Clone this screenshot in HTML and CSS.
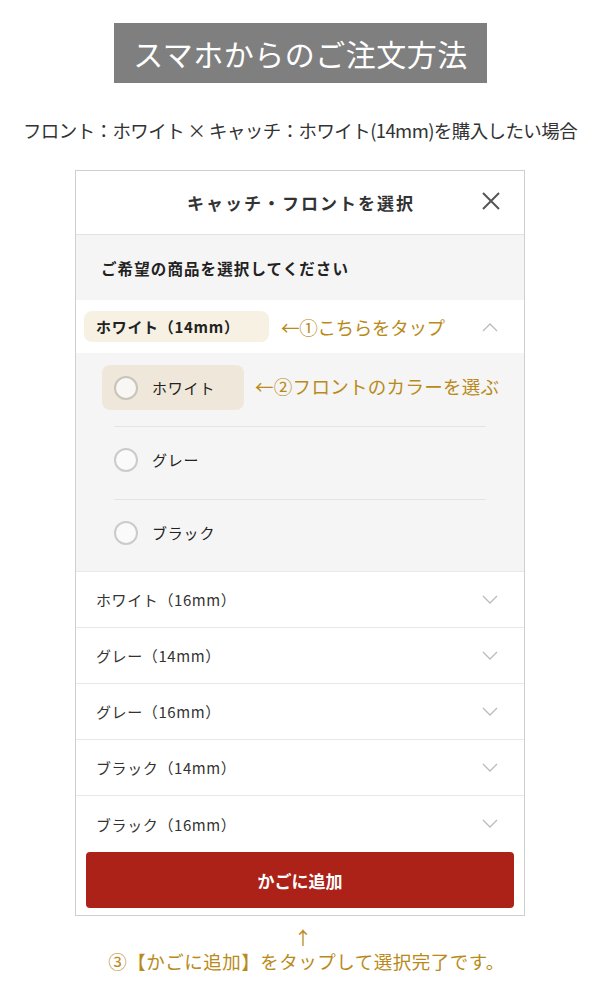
FILE: index.html
```html
<!DOCTYPE html>
<html lang="ja">
<head>
<meta charset="utf-8">
<link rel="stylesheet" href="styles.css">
</head>
<body>
<div class="page">
  <div class="title-wrap"><h1 class="title">スマホからのご注文方法</h1></div>
  <p class="lead">フロント：ホワイト × キャッチ：ホワイト(14mm)を購入したい場合</p>
  <div class="panel">
    <div class="panel-head">
      <span class="panel-title">キャッチ・フロントを選択</span>
      <svg class="close" width="22" height="22" viewBox="0 0 22 22"><path d="M3 3L19 19M19 3L3 19" stroke="#555" stroke-width="2" fill="none"/></svg>
    </div>
    <div class="prompt">ご希望の商品を選択してください</div>
    <div class="row row-open">
      <span class="badge">ホワイト（14mm）</span>
      <span class="note">←①こちらをタップ</span>
      <svg class="chev" width="16" height="10" viewBox="0 0 16 10"><path d="M1 9L8 2L15 9" stroke="#bbb" stroke-width="1.3" fill="none"/></svg>
    </div>
    <div class="options">
      <div class="opt opt-first">
        <span class="opt-hl"><span class="radio"></span><span class="opt-label">ホワイト</span></span>
        <span class="note note2">←②フロントのカラーを選ぶ</span>
      </div>
      <div class="opt"><span class="opt-hl plain"><span class="radio"></span><span class="opt-label">グレー</span></span></div>
      <div class="opt"><span class="opt-hl plain"><span class="radio"></span><span class="opt-label">ブラック</span></span></div>
    </div>
    <div class="row"><span class="row-label">ホワイト（16mm）</span><svg class="chev" width="16" height="10" viewBox="0 0 16 10"><path d="M1 1L8 8L15 1" stroke="#bbb" stroke-width="1.3" fill="none"/></svg></div>
    <div class="row"><span class="row-label">グレー（14mm）</span><svg class="chev" width="16" height="10" viewBox="0 0 16 10"><path d="M1 1L8 8L15 1" stroke="#bbb" stroke-width="1.3" fill="none"/></svg></div>
    <div class="row"><span class="row-label">グレー（16mm）</span><svg class="chev" width="16" height="10" viewBox="0 0 16 10"><path d="M1 1L8 8L15 1" stroke="#bbb" stroke-width="1.3" fill="none"/></svg></div>
    <div class="row"><span class="row-label">ブラック（14mm）</span><svg class="chev" width="16" height="10" viewBox="0 0 16 10"><path d="M1 1L8 8L15 1" stroke="#bbb" stroke-width="1.3" fill="none"/></svg></div>
    <div class="row row-last"><span class="row-label">ブラック（16mm）</span><svg class="chev" width="16" height="10" viewBox="0 0 16 10"><path d="M1 1L8 8L15 1" stroke="#bbb" stroke-width="1.3" fill="none"/></svg></div>
    <div class="btn-wrap"><div class="btn">かごに追加</div></div>
  </div>
  <div class="foot">
    <div class="arrow">↑</div>
    <div class="foot-text">③【かごに追加】をタップして選択完了です。</div>
  </div>
</div>
</body>
</html>
```
FILE: styles.css
```css
* { box-sizing: border-box; }
html, body { margin: 0; padding: 0; background: #fff; }
body { font-family: "Noto Sans CJK JP", "Noto Sans", sans-serif; color: #333; }
.page { width: 600px; padding-top: 23px; }
.title-wrap { display: flex; justify-content: center; }
.title {
  margin: 0; width: 373px; height: 60px; margin-left: 1px;
  background: #7f7f7f; color: #fff; font-weight: 400; font-size: 30px;
  display: flex; align-items: center; justify-content: center; letter-spacing: 0.5px;
}
.lead { margin: 25px 0 0; text-align: center; font-size: 18.5px; line-height: 44px; color: #333; letter-spacing: -0.6px; }
.panel { width: 450px; margin: 18px 0 0 75px; border: 1px solid #cfcfcf; background: #fff; }
.panel-head { height: 64px; display: flex; align-items: center; justify-content: center; position: relative; border-bottom: 1px solid #e2e2e2; }
.panel-title { font-size: 17px; font-weight: 700; color: #333; letter-spacing: 2px; margin-left: 2px; }
.close { position: absolute; right: 22px; top: 19px; }
.prompt { height: 65px; background: #f5f5f5; display: flex; align-items: center; padding-left: 25px; font-size: 15.5px; font-weight: 700; color: #222; letter-spacing: 1.1px; }
.row { height: 56px; display: flex; align-items: center; padding-left: 20px; padding-right: 26px; border-bottom: 1px solid #e8e8e8; }
.row-open { height: 53px; padding-left: 8px; border-bottom: none; }
.badge { background: #f7f1e3; border-radius: 8px; height: 31px; width: 185px; flex: none; display: flex; align-items: center; padding-left: 12px; font-size: 15px; font-weight: 700; color: #222; letter-spacing: 0.7px; }
.note { color: #b98a1a; font-size: 18.5px; margin-left: 12px; letter-spacing: -0.3px; white-space: nowrap; }
.note2 { margin-left: 11px; letter-spacing: 0.3px; }
.chev { margin-left: auto; }
.row-label { font-size: 15px; color: #333; letter-spacing: 0.6px; }
.options { background: #f5f5f5; padding: 12px 38px 0 26px; border-bottom: 1px solid #e8e8e8; height: 219px; }
.opt { height: 73px; display: flex; align-items: center; border-top: 1px solid #e4e4e4; margin-left: 12px; padding-bottom: 7px; }
.opt-first { border-top: none; margin-left: 0; height: 61px; align-items: flex-start; padding-bottom: 0; }
.opt:not(.opt-first) .opt-hl { margin-left: -12px; }
.opt-hl { display: flex; align-items: center; height: 45px; width: 142px; flex: none; border-radius: 8px; background: #efe8da; padding-left: 12px; }
.opt-hl.plain { background: transparent; }
.opt-first .note2 { align-self: flex-start; margin-top: 8px; }
.radio { width: 24px; height: 24px; border-radius: 50%; border: 2px solid #c9c4bb; background: #f8f7f4; flex: none; }
.plain .radio { border-color: #cbcbcb; background: #fafafa; }
.opt-label { margin-left: 14px; font-size: 15px; color: #222; letter-spacing: 0.8px; }
.row-last { border-bottom: none; }
.btn-wrap { padding: 0 10px 7px; }
.btn { height: 56px; background: #ad2218; border-radius: 4px; color: #fff; font-size: 17px; font-weight: 700; display: flex; align-items: center; justify-content: center; }
.foot { text-align: center; color: #b98a1a; }
.arrow { font-size: 18px; line-height: 18px; margin-top: 12px; margin-left: 6px; }
.foot-text { font-size: 18.5px; line-height: 28px; margin-top: 1px; letter-spacing: 0.5px; padding-left: 13px; }
```
